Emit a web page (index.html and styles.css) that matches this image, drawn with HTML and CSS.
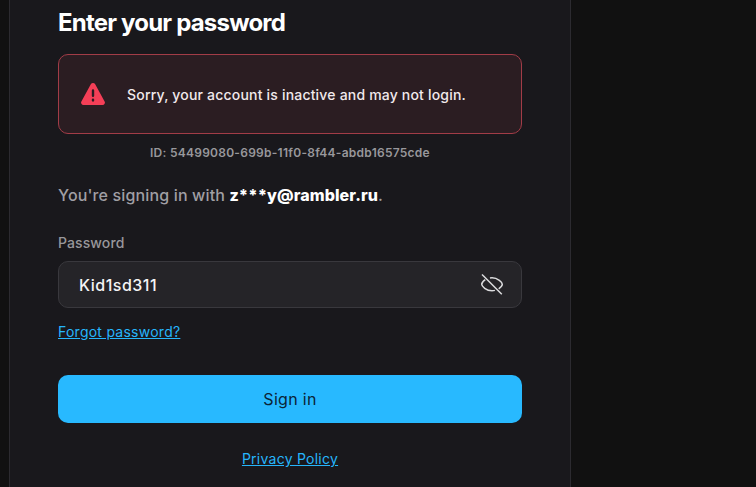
FILE: index.html
```html
<!DOCTYPE html>
<html lang="en">
  <head>
    <meta charset="UTF-8" />
    <meta name="viewport" content="width=device-width, initial-scale=1.0" />
    <title>Sign in</title>
    <link rel="stylesheet" href="styles.css">
  </head>
  <body>
    <main class="login-card">
      <h1 class="login-title">Enter your password</h1>

      <div class="alert" role="alert">
        <svg class="alert-icon" width="24" height="22" viewBox="0 0 24 22">
          <path
            d="M9.8 1.3a2.55 2.55 0 0 1 4.4 0l9.4 17.1a2.4 2.4 0 0 1-2.1 3.6h-19a2.4 2.4 0 0 1-2.1-3.6z"
            fill="#f43f57"
          />
          <path d="M12 7.4v5.400M12 16.600v.8" stroke="#2b1d22" stroke-width="2.4" stroke-linecap="round" />
        </svg>
        <p class="alert-text">Sorry, your account is inactive and may not login.</p>
      </div>
      <p class="request-id">ID: 54499080-699b-11f0-8f44-abdb16575cde</p>

      <p class="account">You're signing in with <b>z***y@rambler.ru</b>.</p>

      <form class="login-form">
        <label class="field-label" for="password">Password</label>
        <div class="field">
          <input class="field-input" id="password" type="text" value="Kid1sd311" spellcheck="false" />
          <button class="field-toggle" type="button" aria-label="Hide password">
            <svg width="24" height="24" viewBox="0 0 24 24" fill="none" stroke="#dcdcde" stroke-width="1.5">
              <path d="M5.300 6.700C3 8.300 1.700 10.200 1.700 11.300c0 2 4.500 6.500 10.300 6.500 1 0 2-.1 2.900-.4" />
              <path d="M10 5C10.700 4.800 11.300 4.800 12 4.800c5.800 0 10.300 4.500 10.300 6.500 0 1.200-1.300 3-3.600 4.500" />
              <path d="M2 1.500l19.800 19.800" />
            </svg>
          </button>
        </div>
        <a class="link forgot-link" href="#">Forgot password?</a>
        <button class="submit-button" type="submit">Sign in</button>
      </form>

      <a class="link privacy-link" href="#">Privacy Policy</a>
    </main>
  </body>
</html>
```
FILE: styles.css
```css
* {
  box-sizing: border-box;
}

body {
  margin: 0;
  height: 100vh;
  overflow: hidden;
  background-color: #111111;
  font-family: Inter, "Liberation Sans", sans-serif;
  color: #fff;
}

.login-card {
  display: flex;
  flex-direction: column;
  width: 562px;
  height: 100%;
  margin-left: 9px;
  padding: 7px 48px 0;
  background-color: #19181c;
  border: 1px solid #2c2b30;
  border-width: 0 1px;
}

.login-title {
  margin: 0 0 15px;
  font-size: 24px;
  line-height: 32px;
  font-weight: 700;
  letter-spacing: -0.8px;
}

/* Error message */
.alert {
  display: flex;
  flex-shrink: 0;
  align-items: center;
  gap: 22px;
  height: 80px;
  padding: 0 22px;
  background-color: #2b1d22;
  border: 1px solid #a23c47;
  border-radius: 10px;
}

.alert-text {
  margin: 2px 0 0;
  font-size: 14px;
  line-height: 20px;
  font-weight: 500;
  letter-spacing: 0.19px;
  color: #f1e9ec;
}

.request-id {
  margin: 9px 0 0;
  font-size: 12px;
  line-height: 20px;
  font-weight: 600;
  letter-spacing: 0.26px;
  text-align: center;
  color: #98979b;
}

.account {
  margin: 20px 0 0;
  font-size: 16px;
  line-height: 24px;
  font-weight: 500;
  letter-spacing: 0.14px;
  color: #a09fa4;
}

.account b {
  font-weight: 800;
  letter-spacing: 0.1px;
  color: #fff;
}

/* Form */
.login-form {
  display: flex;
  flex-direction: column;
  margin-top: 26px;
}

.field-label {
  font-size: 14px;
  line-height: 20px;
  font-weight: 500;
  letter-spacing: 0.1px;
  color: #98979b;
}

.field {
  display: flex;
  align-items: center;
  height: 47px;
  margin-top: 8px;
  padding: 0 17px 0 20px;
  background-color: #252428;
  border: 1px solid #39383d;
  border-radius: 10px;
}

.field-input {
  flex: 1;
  min-width: 0;
  padding: 0;
  background: none;
  border: none;
  outline: none;
  font-family: inherit;
  font-size: 16px;
  font-weight: 500;
  letter-spacing: 0.5px;
  color: #f4f4f5;
}

.field-toggle {
  display: flex;
  padding: 0;
  background: none;
  border: none;
  cursor: pointer;
}

.link {
  font-size: 14px;
  line-height: 20px;
  letter-spacing: 0.25px;
  color: #26b5fb;
}

.forgot-link {
  align-self: flex-start;
  margin-top: 14px;
}

.submit-button {
  height: 48px;
  margin-top: 33px;
  background-color: #28b9ff;
  border: none;
  border-radius: 10px;
  font-family: inherit;
  font-size: 16px;
  letter-spacing: 0.3px;
  color: #0b2436;
  cursor: pointer;
}

.privacy-link {
  align-self: center;
  margin-top: 26px;
}
```
